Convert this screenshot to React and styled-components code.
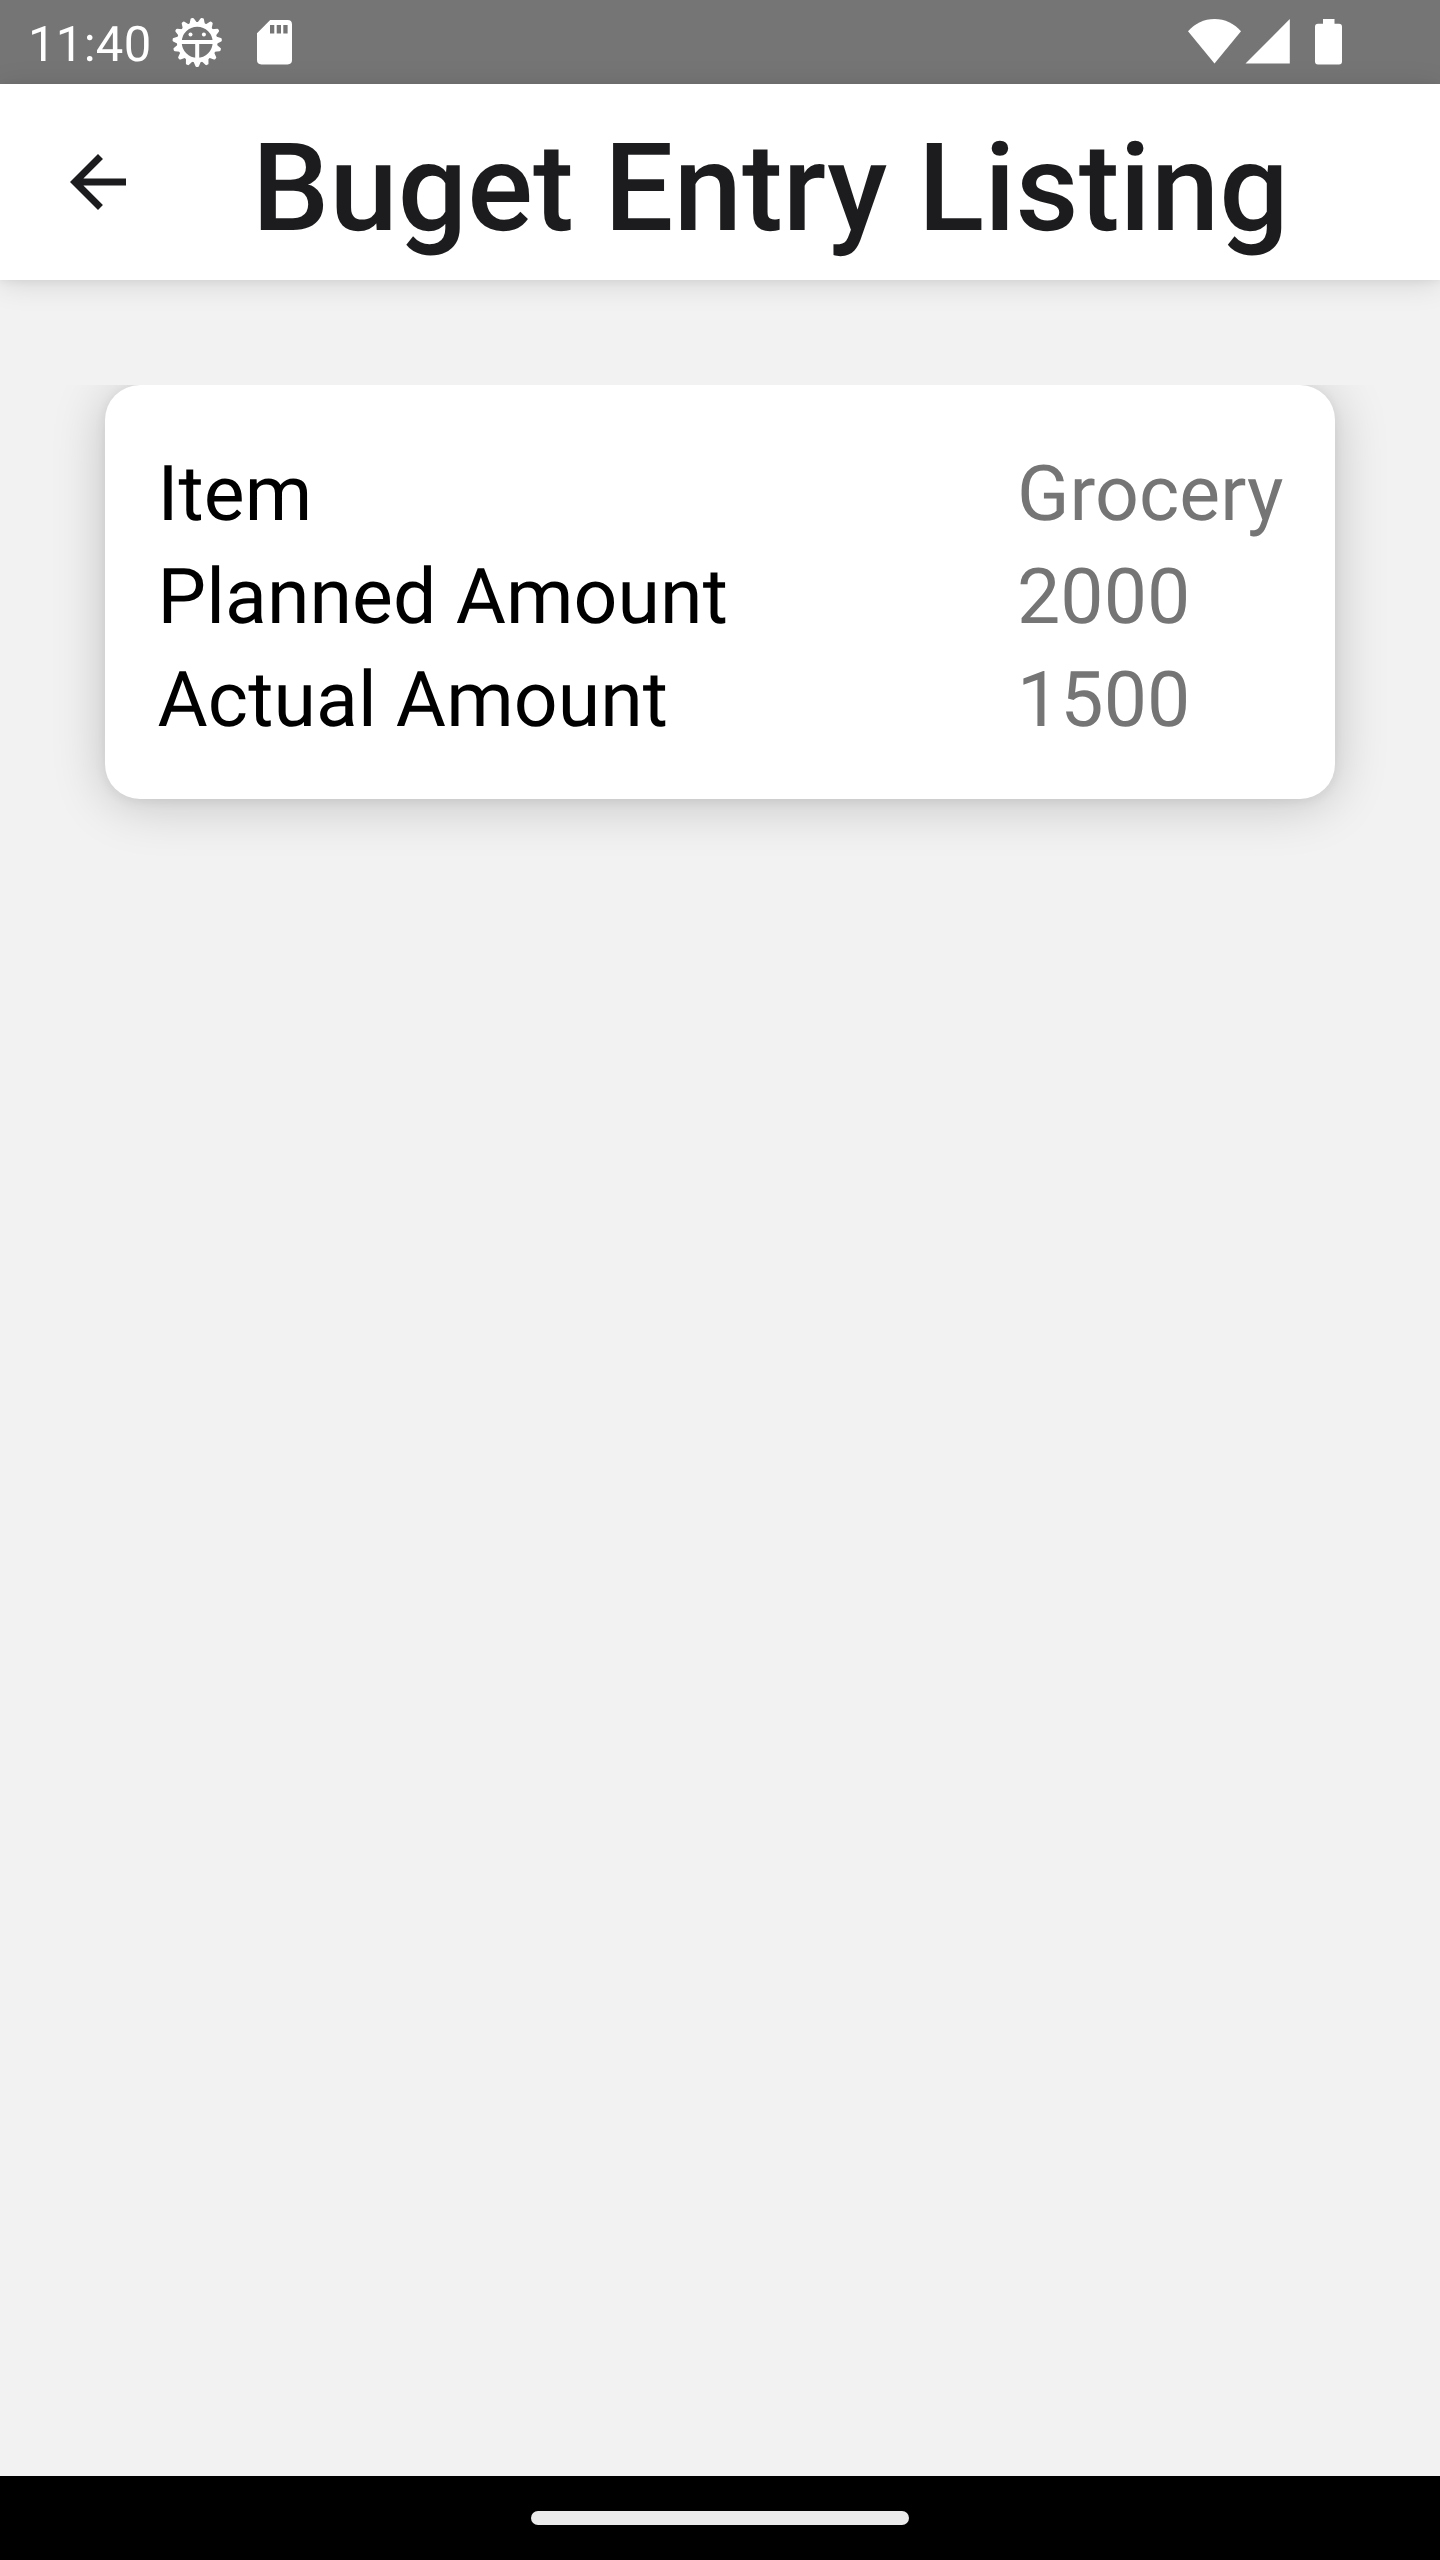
import React from "react";
import styled, { createGlobalStyle } from "styled-components";

const GlobalStyle = createGlobalStyle`
  * { box-sizing: border-box; }
  body {
    margin: 0;
    background: #f2f2f2;
    font-family: Roboto, "Liberation Sans", sans-serif;
    text-rendering: geometricPrecision;
  }
`;

const Screen = styled.div`
  display: flex;
  flex-direction: column;
  width: 1440px;
  height: 2560px;
  overflow: hidden;
  background: #f2f2f2;
`;

const StatusBar = styled.div`
  display: flex;
  flex: none;
  justify-content: space-between;
  height: 84px;
  padding: 0 98px 0 28px;
  background: #757575;
  color: #fff;
`;

const StatusGroup = styled.div`
  display: flex;
  align-items: flex-start;
`;

const Clock = styled.span`
  width: 144px;
  padding-top: 16px;
  font-size: 49px;
  line-height: 57px;
  letter-spacing: 0.3px;
  white-space: nowrap;
`;

const StatusIcon = styled.svg`
  display: block;
  flex: none;
  width: ${(p) => p.$w}px;
  height: ${(p) => p.$h}px;
  margin: ${(p) => p.$top}px 0 0 ${(p) => p.$gap || 0}px;
`;

const Header = styled.header`
  display: flex;
  flex: none;
  z-index: 1;
  height: 196px;
  padding: 0 56px;
  background: #fff;
  box-shadow: 0 1px 8px rgba(0, 0, 0, 0.06), 0 4px 28px rgba(0, 0, 0, 0.12);
`;

const BackButton = styled.button`
  width: 84px;
  height: 84px;
  margin-top: 56px;
  padding: 0;
  border: 0;
  background: none;
  svg { display: block; }
`;

const Title = styled.h1`
  margin: 0 0 0 112px;
  padding-top: 32px;
  font-size: 122.5px;
  font-weight: 500;
  line-height: 144px;
  letter-spacing: 0.1px;
  color: #1c1c1e;
  white-space: nowrap;
`;

const Content = styled.main`
  flex: 1;
  padding: 105px;
`;

const Card = styled.section`
  display: flex;
  justify-content: space-between;
  height: 414px;
  padding: 58px 51.5px 47px 52.5px;
  border-radius: 35px;
  background: #fff;
  box-shadow: 0 2px 12px rgba(0, 0, 0, 0.07), 0 5px 54px rgba(0, 0, 0, 0.2);
  clip-path: inset(0 -70px -90px -70px);
`;

const Column = styled.div`
  display: flex;
  flex-direction: column;
  font-size: 77px;
  line-height: 103px;
  letter-spacing: 0.07px;
  white-space: nowrap;
  color: ${(p) => (p.$muted ? "#757575" : "#000")};
`;

const NavBar = styled.footer`
  display: flex;
  flex: none;
  justify-content: center;
  height: 84px;
  padding-top: 35px;
  background: #000;
`;

const Handle = styled.div`
  width: 378px;
  height: 14px;
  border-radius: 7px;
  background: #ebebeb;
`;

const entry = [
  ["Item", "Grocery"],
  ["Planned Amount", "2000"],
  ["Actual Amount", "1500"],
];

const teeth = Array.from({ length: 15 }, (_, i) => 12 + i * 24);

function GearIcon() {
  return (
    <StatusIcon $w={50} $h={50} $top={17} viewBox="0 0 50 50">
      <circle cx="25.2" cy="25.2" r="17.9" fill="none" stroke="#fff" strokeWidth="4.8" />
      <g fill="#fff" stroke="#fff" strokeWidth="2.4" strokeLinejoin="round">
        {teeth.map((a) => (
          <path key={a} d="M22.6 6.4 L24.6 1.7 H25.8 L27.8 6.4 Z" transform={`rotate(${a} 25.2 25.2)`} />
        ))}
      </g>
      <path d="M9 25.1H41.5M25.2 25V41" stroke="#fff" strokeWidth="4" />
      <circle cx="18.5" cy="17.5" r="2" fill="#fff" />
      <circle cx="31.9" cy="17.5" r="2" fill="#fff" />
    </StatusIcon>
  );
}

export default function App() {
  return (
    <Screen>
      <GlobalStyle />
      <StatusBar>
        <StatusGroup>
          <Clock>11:40</Clock>
          <GearIcon />
          <StatusIcon $w={35} $h={45} $top={20} $gap={35} viewBox="0 0 35 45">
            <path
              fill="#fff"
              fillRule="evenodd"
              d="M13.2 0H30.6Q35 0 35 4.4V40Q35 44.4 30.6 44.4H4.4Q0 44.4 0 40V13.2ZM13 5V13.6H17.3V5ZM19.7 5V13.6H24V5ZM26.3 5V13.6H30.6V5Z"
            />
          </StatusIcon>
        </StatusGroup>
        <StatusGroup>
          <StatusIcon $w={53} $h={45} $top={19} viewBox="0 0 53 45">
            <path fill="#fff" d="M0 12.2C7 4.5 16 0 26.5 0S46 4.5 53 12.2L26.5 44.4Z" />
          </StatusIcon>
          <StatusIcon $w={45} $h={45} $top={19} $gap={4} viewBox="0 0 45 45">
            <path fill="#fff" d="M0.5 44.5L44.8 0V44.5Z" />
          </StatusIcon>
          <StatusIcon $w={27} $h={46} $top={19} $gap={25} viewBox="0 0 27 46">
            <path
              fill="#fff"
              d="M8 0H19.5V4.8H24Q27 4.8 27 7.8V42.6Q27 45.6 24 45.6H3Q0 45.6 0 42.6V7.8Q0 4.8 3 4.8H8Z"
            />
          </StatusIcon>
        </StatusGroup>
      </StatusBar>
      <Header>
        <BackButton aria-label="Back">
          <svg width="84" height="84" viewBox="0 0 24 24">
            <path fill="#1c1c1e" d="M20 11H7.83l5.59-5.59L12 4l-8 8 8 8 1.41-1.41L7.83 13H20v-2z" />
          </svg>
        </BackButton>
        <Title>Buget Entry Listing</Title>
      </Header>
      <Content>
        <Card>
          <Column>
            {entry.map(([label]) => (
              <span key={label}>{label}</span>
            ))}
          </Column>
          <Column $muted>
            {entry.map(([label, value]) => (
              <span key={label}>{value}</span>
            ))}
          </Column>
        </Card>
      </Content>
      <NavBar>
        <Handle />
      </NavBar>
    </Screen>
  );
}
